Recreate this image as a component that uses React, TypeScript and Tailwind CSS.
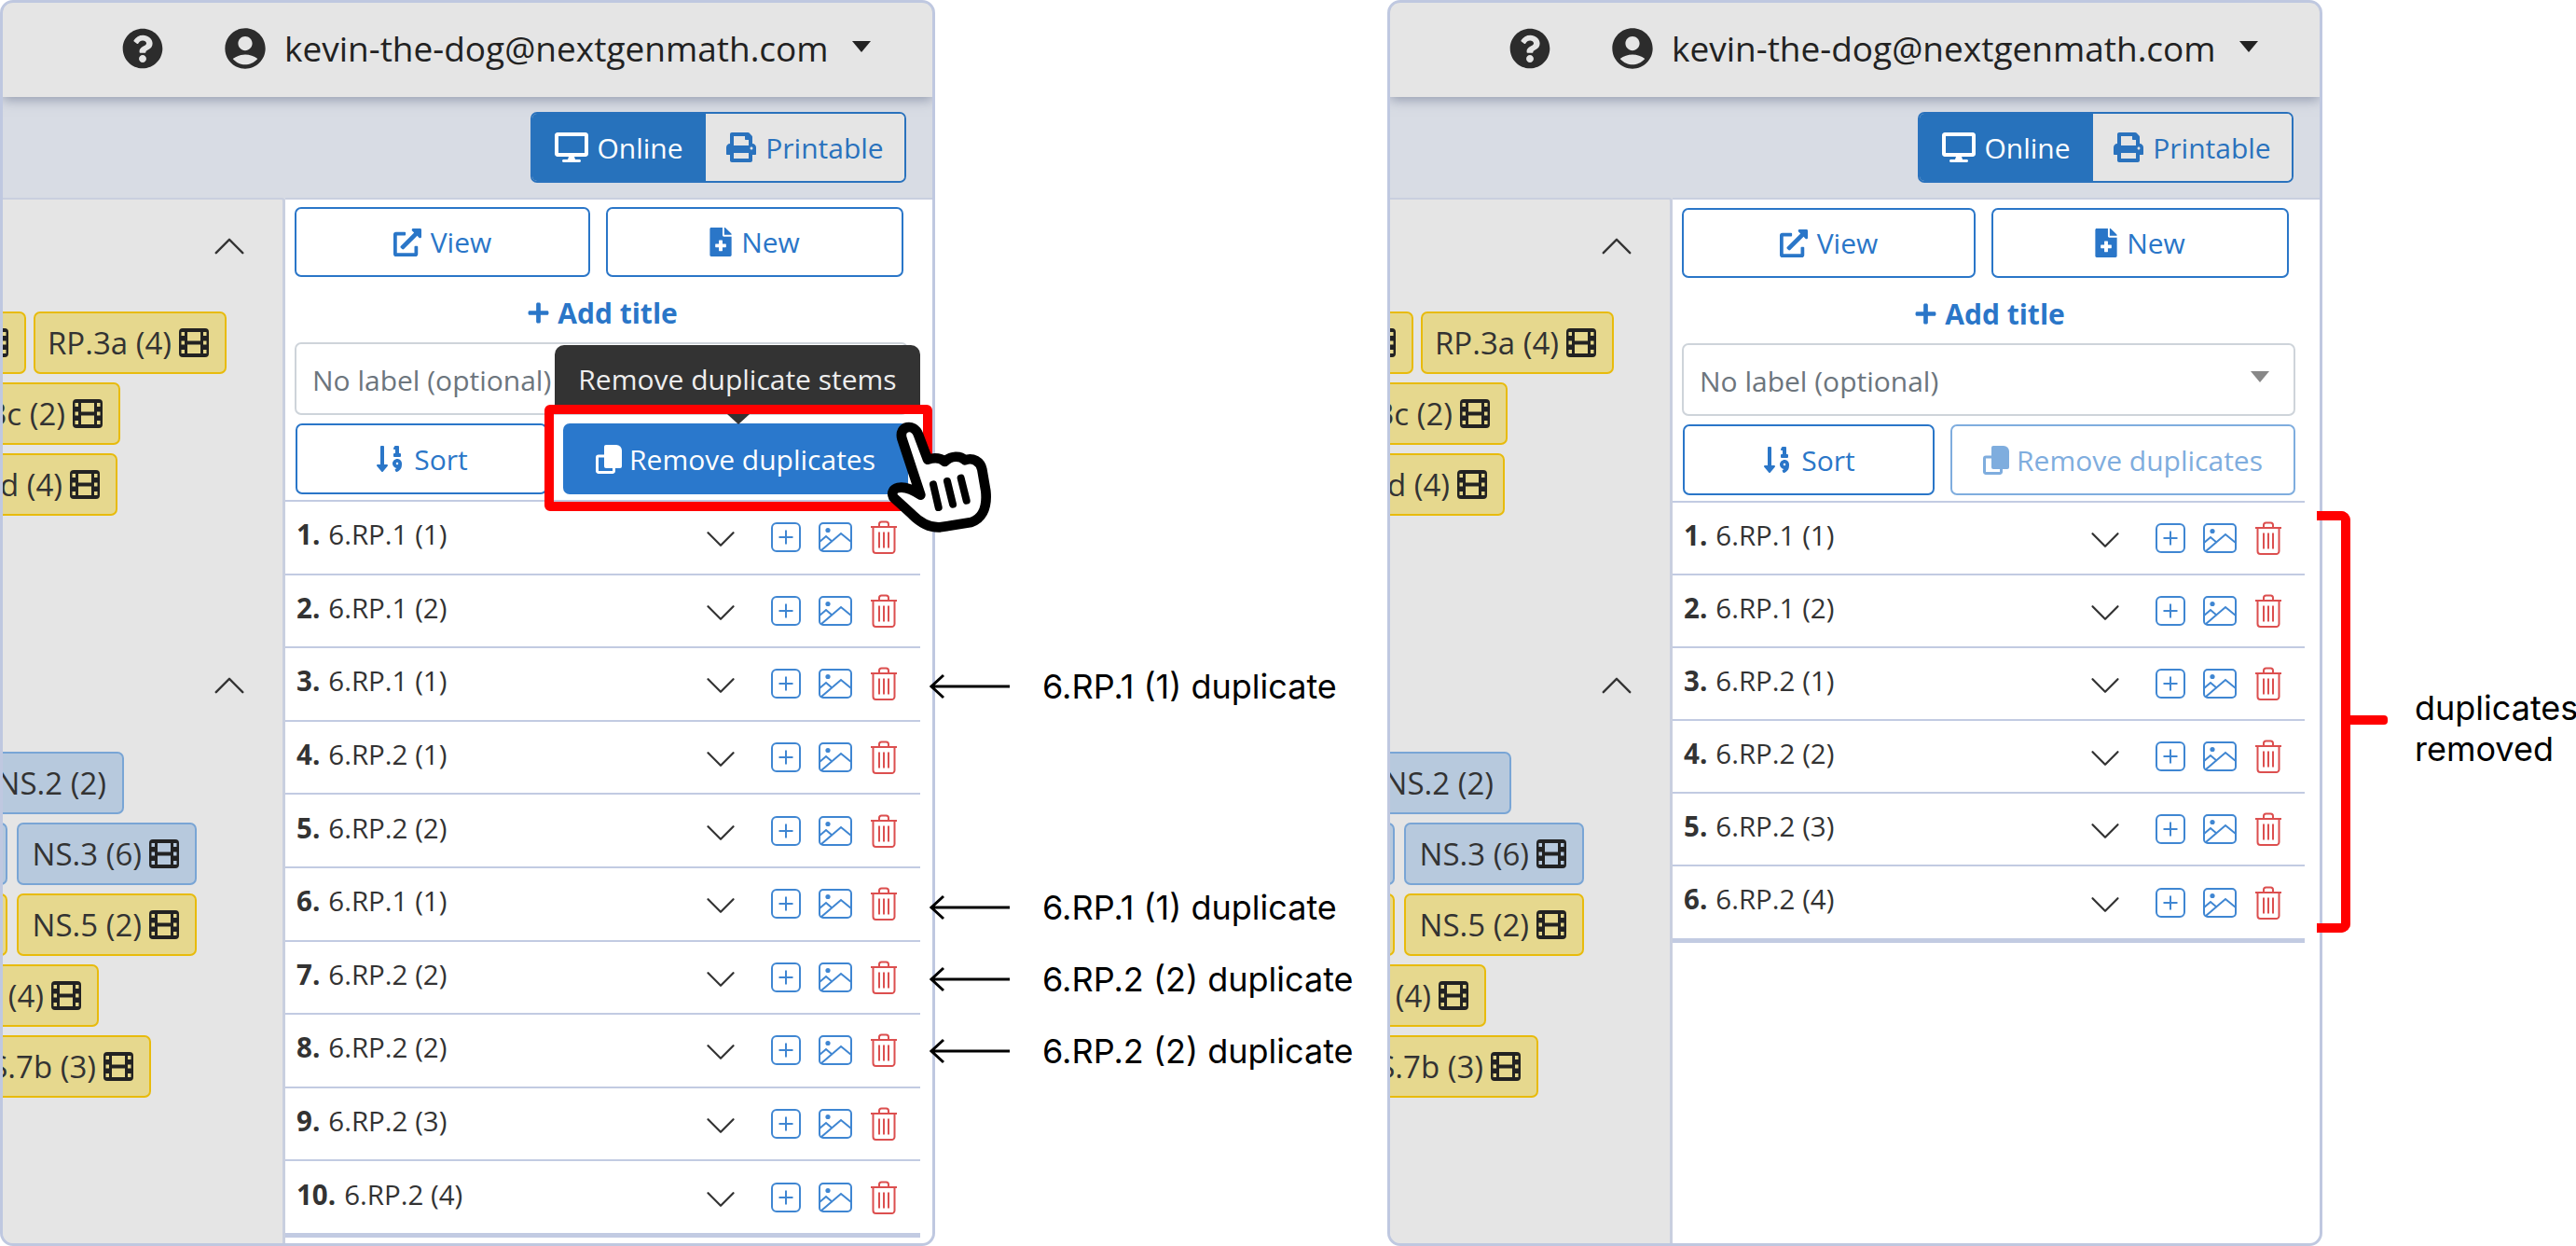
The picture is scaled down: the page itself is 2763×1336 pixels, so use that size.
import { BsChevronDown, BsChevronUp } from 'react-icons/bs';
import {
  FaDesktop,
  FaExternalLinkAlt,
  FaFileMedical,
  FaPlus,
  FaPrint,
  FaQuestionCircle,
  FaSortNumericDown,
} from 'react-icons/fa';
import { MdAccountCircle } from 'react-icons/md';

const stemsBefore = [
  '6.RP.1 (1)',
  '6.RP.1 (2)',
  '6.RP.1 (1)',
  '6.RP.2 (1)',
  '6.RP.2 (2)',
  '6.RP.1 (1)',
  '6.RP.2 (2)',
  '6.RP.2 (2)',
  '6.RP.2 (3)',
  '6.RP.2 (4)',
];

const stemsAfter = ['6.RP.1 (1)', '6.RP.1 (2)', '6.RP.2 (1)', '6.RP.2 (2)', '6.RP.2 (3)', '6.RP.2 (4)'];

function FilmIcon() {
  return (
    <svg width="32" height="31" viewBox="0 0 32 31" className="shrink-0">
      <path
        fill="#222"
        fillRule="evenodd"
        d="M4 0h24a4 4 0 0 1 4 4v23a4 4 0 0 1-4 4H4a4 4 0 0 1-4-4V4a4 4 0 0 1 4-4zM9 4v9.5h14V4zM9 17.5V27h14v-9.5zM2.5 4v4h3.5V4zM26 4v4h3.5V4zM2.5 13.500v4h3.5v-4zM26 13.500v4h3.5v-4zM2.500 23v4h3.5v-4zM26 23v4h3.5v-4z"
      />
    </svg>
  );
}

function CopyIcon() {
  return (
    <svg width="28" height="31" viewBox="0 0 28 31" fill="none" className="shrink-0">
      <path fill="currentColor" d="M11 0h11a6 6 0 0 1 6 6v17a2 2 0 0 1-2 2H11a2 2 0 0 1-2-2V2a2 2 0 0 1 2-2z" />
      <path stroke="currentColor" strokeWidth="3" d="M9 12H3a1.500 1.500 0 0 0-1.500 1.500V28A1.500 1.500 0 0 0 3 29.500h15a1.500 1.500 0 0 0 1.500-1.500v-3" />
    </svg>
  );
}

function ImageIcon() {
  return (
    <svg width="36" height="32" viewBox="0 0 36 32" fill="none" stroke="#3f86d2" strokeWidth="2">
      <rect x="1" y="1" width="34" height="30" rx="4" />
      <circle cx="10" cy="8.5" r="2.6" fill="#3f86d2" stroke="none" />
      <path d="M1 21l7-6 7 6M3 30l21-18 11 9" />
    </svg>
  );
}

function PlusBoxIcon() {
  return (
    <svg width="32" height="32" viewBox="0 0 32 32" fill="none" stroke="#3f86d2" strokeWidth="2">
      <rect x="1" y="1" width="30" height="30" rx="5" />
      <path d="M16 8.5v15M8.5 16h15" />
    </svg>
  );
}

function TrashIcon() {
  return (
    <svg width="30" height="36" viewBox="0 0 30 36" fill="none" stroke="#dc4f4f" strokeWidth="2">
      <path d="M1 7h28M10 7V4a2.5 2.5 0 0 1 2.5-2.5h5A2.5 2.5 0 0 1 20 4v3" />
      <path d="M3.5 7v25a3 3 0 0 0 3 3h17a3 3 0 0 0 3-3V7" />
      <path d="M10 12.5v17M15 12.5v17M20 12.5v17" />
    </svg>
  );
}

function Tag({ label, tone, film, width }: { label: string; tone: 'yellow' | 'blue'; film?: boolean; width: string }) {
  const toneClass = tone === 'yellow' ? 'bg-[#e6d88e] border-[#e8bb0c]' : 'bg-[#b7c9dd] border-[#79a5d5]';
  return (
    <div
      className={`h-[67px] shrink-0 rounded-[7px] border-2 flex items-center justify-end gap-[8px] pr-[17px] text-[33px] text-[#333] ${toneClass} ${width}`}
    >
      <span className="whitespace-nowrap">{label}</span>
      {film && <FilmIcon />}
    </div>
  );
}

function TagPanel() {
  return (
    <div className="w-[303px] shrink-0 bg-[#e5e5e5] border-r-[3px] border-t-[2px] border-[#c9cfdf] rounded-tr-[4px] overflow-hidden">
      <div className="flex justify-end pr-[38px] pt-[31px] h-[120px]">
        <BsChevronUp className="w-[38px] h-[38px] text-[#333]" />
      </div>
      <div className="flex flex-col gap-[9px] items-start">
        <div className="flex gap-[8px] ml-[-130px]">
          <Tag label="RP.2b (3)" tone="yellow" film width="w-[155px]" />
          <Tag label="RP.3a (4)" tone="yellow" film width="w-[207px]" />
        </div>
        <div className="ml-[-81px]">
          <Tag label="RP.3c (2)" tone="yellow" film width="w-[207px]" />
        </div>
        <div className="ml-[-84px]">
          <Tag label="RP.3d (4)" tone="yellow" film width="w-[207px]" />
        </div>
      </div>
      <div className="flex justify-end pr-[38px] pt-[163px] h-[253px]">
        <BsChevronUp className="w-[38px] h-[38px] text-[#333]" />
      </div>
      <div className="flex flex-col gap-[9px] items-start">
        <div className="ml-[-47px]">
          <Tag label="NS.2 (2)" tone="blue" width="w-[177px]" />
        </div>
        <div className="flex gap-[10px] ml-[-160px]">
          <Tag label="NS.1 (2)" tone="blue" width="w-[165px]" />
          <Tag label="NS.3 (6)" tone="blue" film width="w-[193px]" />
        </div>
        <div className="flex gap-[10px] ml-[-160px]">
          <Tag label="NS.4 (2)" tone="yellow" width="w-[165px]" />
          <Tag label="NS.5 (2)" tone="yellow" film width="w-[193px]" />
        </div>
        <div className="ml-[-90px]">
          <Tag label="NS.6 (4)" tone="yellow" film width="w-[193px]" />
        </div>
        <div className="ml-[-46px]">
          <Tag label="NS.7b (3)" tone="yellow" film width="w-[205px]" />
        </div>
      </div>
    </div>
  );
}

function StemRow({ n, label, after }: { n: number; label: string; after?: boolean }) {
  return (
    <div className={`border-t-2 border-[#c2cbe2] flex items-center ${after ? 'h-[78.1px]' : 'h-[78.6px]'}`}>
      <div className="flex-1 pl-[12px] pb-[6px] text-[29.5px] text-[#333] whitespace-nowrap">
        <span className="font-bold mr-[9px]">{n}.</span>
        {label}
      </div>
      <BsChevronDown className="w-[36px] h-[36px] text-[#333] mr-[36px] mt-[4px]" />
      <div className="flex items-center gap-[19px] pr-[24px]">
        <PlusBoxIcon />
        <ImageIcon />
        <TrashIcon />
      </div>
    </div>
  );
}

function Window({ stems, after }: { stems: string[]; after?: boolean }) {
  return (
    <div className="w-[1003px] h-[1336px] shrink-0 flex flex-col border-[3px] border-[#bfc8e0] rounded-[14px] overflow-hidden bg-[#d8dce4]">
      <div className="h-[101px] shrink-0 bg-[#e5e5e5] shadow-[0_3px_12px_rgba(90,100,130,0.55)] relative flex items-center pl-[128px] pb-[4px] text-[#222]">
        <FaQuestionCircle className="w-[44px] h-[44px] text-[#2c2c2c]" />
        <MdAccountCircle className="w-[52px] h-[52px] ml-[62px] text-[#2c2c2c]" />
        <span className="ml-[16px] text-[37px] leading-none">kevin-the-dog@nextgenmath.com</span>
        <span className="ml-[25px] mb-[4px] border-x-[10px] border-x-transparent border-t-[12px] border-t-[#222]" />
      </div>

      <div className="h-[108px] shrink-0 flex justify-end items-start pt-[16px] pr-[28px]">
        <div className="flex h-[76px] w-[403px] rounded-[7px] border-2 border-[#2a72bd] overflow-hidden text-[30px]">
          <div className="w-[186px] bg-[#2772bc] text-white flex items-center justify-center gap-[9px]">
            <FaDesktop className="w-[36px] h-[32px]" />
            Online
          </div>
          <div className="flex-1 bg-[#e5e5e5] text-[#2a72bd] flex items-center justify-center gap-[10px]">
            <FaPrint className="w-[32px] h-[32px]" />
            Printable
          </div>
        </div>
      </div>

      <div className="flex-1 flex min-h-0">
        <TagPanel />
        <div className={`flex-1 bg-white border-t-[2px] border-[#c9cfdf] ${after ? 'pt-[9px]' : 'pt-[8px]'}`}>
          <div className="px-[10px] flex gap-[17px]">
            <button className={`h-[75px] rounded-[7px] border-2 border-[#2a76c8] text-[#2a76c8] text-[30px] flex items-center justify-center gap-[10px] ${after ? 'w-[315px]' : 'w-[317px]'}`}>
              <FaExternalLinkAlt className="w-[30px] h-[30px]" />
              View
            </button>
            <button className="h-[75px] w-[319px] rounded-[7px] border-2 border-[#2a76c8] text-[#2a76c8] text-[30px] flex items-center justify-center gap-[10px]">
              <FaFileMedical className="w-[24px] h-[31px]" />
              New
            </button>
          </div>
          <div className="h-[70px] pt-[6px] flex items-center justify-center gap-[8px] text-[#2a76c8] text-[30px] font-bold pr-[14px]">
            <FaPlus className="w-[25px] h-[25px]" />
            Add title
          </div>
          <div className="mx-[10px] h-[78px] w-[658px] rounded-[7px] border-2 border-[#ced4da] flex items-center justify-between pl-[17px] pr-[26px] pt-[2px] text-[30px] text-[#6c757d]">
            No label (optional)
            <span className="mb-[8px] border-x-[10px] border-x-transparent border-t-[12px] border-t-[#888]" />
          </div>
          <div className="mt-[9px] pl-[11px] flex gap-[17px]">
            <button className="h-[76px] w-[270px] rounded-[7px] border-2 border-[#2a76c8] text-[#2a76c8] text-[30px] flex items-center justify-center gap-[10px]">
              <FaSortNumericDown className="w-[32px] h-[32px]" />
              Sort
            </button>
            {after ? (
              <button className="h-[76px] w-[370px] rounded-[7px] border-2 border-[#7fadde] text-[#7fadde] text-[30px] flex items-center justify-center gap-[8px]">
                <CopyIcon />
                Remove duplicates
              </button>
            ) : (
              <button className="h-[76px] w-[370px] rounded-[7px] bg-[#2a78cc] text-white text-[30px] flex items-center justify-center gap-[8px]">
                <CopyIcon />
                Remove duplicates
              </button>
            )}
          </div>
          <div className={`mt-[6px] border-b-[5px] border-[#c2cbe2] ${after ? 'w-[678px]' : 'w-[681px]'}`}>
            {stems.map((label, i) => (
              <StemRow key={i} n={i + 1} label={label} after={after} />
            ))}
          </div>
        </div>
      </div>
    </div>
  );
}

function Note({ text, top }: { text: string; top: string }) {
  return (
    <div className={`flex items-center ${top}`}>
      <svg width="86" height="30" viewBox="0 0 86 30" fill="none" stroke="#000" strokeWidth="3">
        <path d="M2 15h84M15 3L2 15l13 12" />
      </svg>
      <span className="ml-[35px] text-[36px] leading-[30px] whitespace-nowrap text-black">{text}</span>
    </div>
  );
}

function Hand() {
  return (
    <svg className="absolute left-[950px] top-[446px]" width="116" height="128" viewBox="1110 258 348 384" fill="none">
      <path
        d="M1222 512L1162 330C1152 290 1200 280 1215 318L1245 398C1270 390 1290 395 1300 405C1320 385 1350 385 1365 400C1390 390 1415 405 1420 430L1432 500C1438 560 1415 590 1385 600L1285 616C1250 618 1220 600 1195 575L1135 520C1120 490 1160 470 1222 512Z"
        fill="#fff"
        stroke="#000"
        strokeWidth="32"
        strokeLinejoin="round"
      />
      <path d="M1263 478L1280 552M1308 468L1326 542M1352 458L1370 530" stroke="#000" strokeWidth="24" strokeLinecap="round" />
    </svg>
  );
}

export default function App() {
  return (
    <div className="relative w-[2763px] h-[1336px] bg-white overflow-hidden flex font-['Open_Sans','Liberation_Sans',sans-serif]">
      <Window stems={stemsBefore} />

      {/* arrows between the two windows */}
      <div className="w-[485px] shrink-0 ml-[-6px] mr-[6px] flex flex-col font-['Inter',sans-serif] relative">
        <Note text="6.RP.1 (1) duplicate" top="mt-[721px]" />
        <Note text="6.RP.1 (1) duplicate" top="mt-[207px]" />
        <Note text="6.RP.2 (2) duplicate" top="mt-[47px]" />
        <Note text="6.RP.2 (2) duplicate" top="mt-[47px]" />
      </div>

      <Window stems={stemsAfter} after />

      {/* tooltip sitting above the active button */}
      <div className="absolute left-[595px] top-[370px] w-[392px] h-[74px] rounded-t-[10px] bg-[#333] text-[#eee] text-[30px] flex justify-center pt-[14px]">
        Remove duplicate stems
      </div>
      <div className="absolute left-[584px] top-[434px] w-[416px] h-[114px] rounded-[6px] border-[10px] border-[#ff0000]" />
      <div className="absolute left-[780px] top-[444px] border-x-[12px] border-x-transparent border-t-[11px] border-t-[#333]" />
      <Hand />

      {/* bracket on the right */}
      <div className="absolute left-[2485px] top-[548px] w-[36px] h-[452px] border-y-[10px] border-r-[10px] border-[#ff0000] rounded-r-[10px]" />
      <div className="absolute left-[2519px] top-[767px] w-[42px] h-[10px] rounded-r-[4px] bg-[#ff0000]" />
      <div className="absolute left-[2590px] top-[737px] text-[36px] leading-[44px] text-black font-['Inter',sans-serif]">
        duplicates
        <br />
        removed
      </div>
    </div>
  );
}
